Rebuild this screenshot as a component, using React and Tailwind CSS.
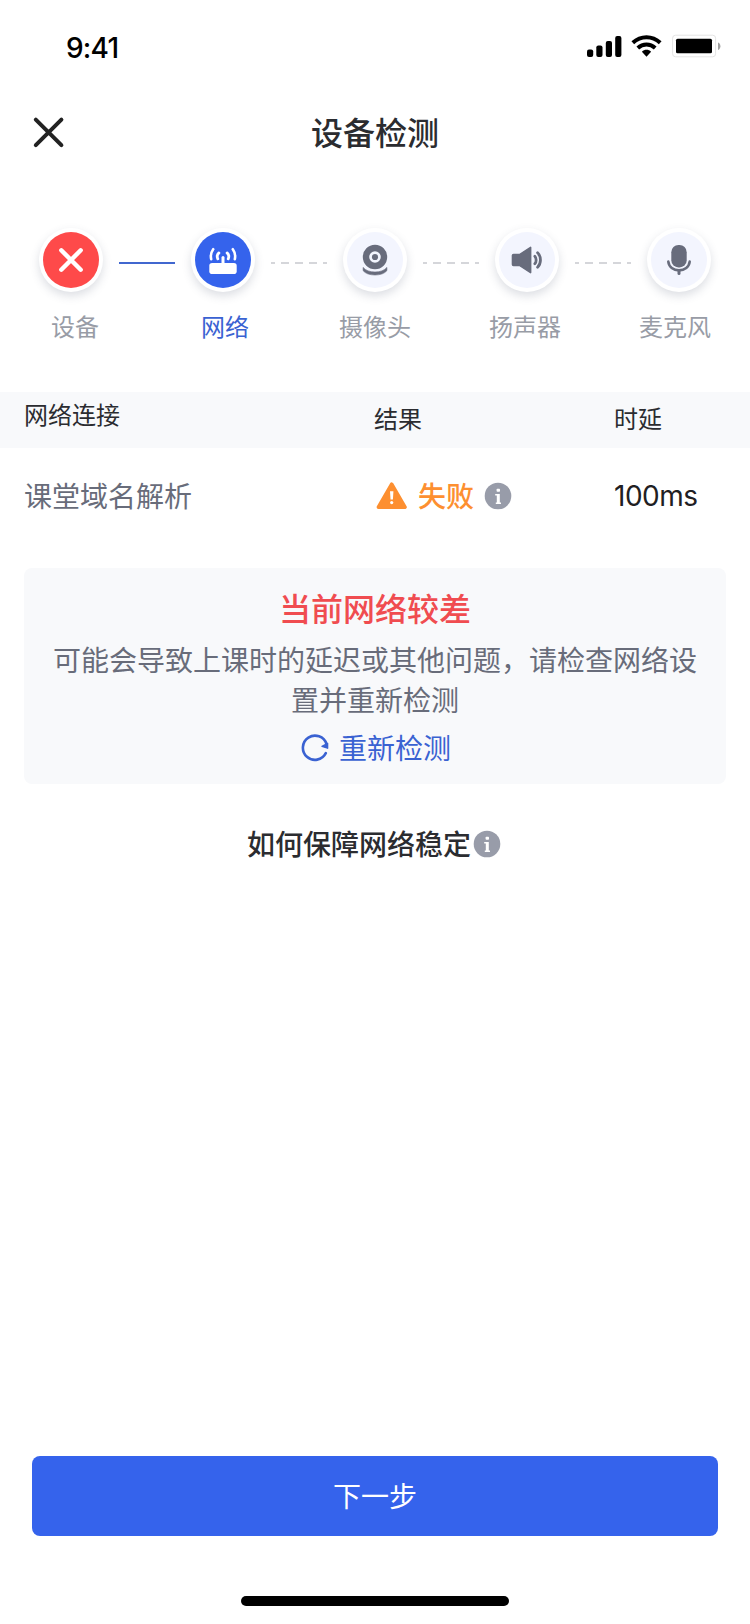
const steps = [
  { id: 'device', label: '设备', status: 'error', icon: CrossIcon },
  { id: 'network', label: '网络', status: 'active', icon: RouterIcon },
  { id: 'camera', label: '摄像头', status: 'idle', icon: CameraIcon },
  { id: 'speaker', label: '扬声器', status: 'idle', icon: SpeakerIcon },
  { id: 'mic', label: '麦克风', status: 'idle', icon: MicIcon },
];

const circleColors = {
  error: 'bg-[#fe4a4a] text-white',
  active: 'bg-[#3563ec] text-white',
  idle: 'bg-[#f3f5fe] text-[#686c7c]',
};

function CrossIcon() {
  return (
    <svg width="56" height="56" viewBox="0 0 56 56" stroke="currentColor" strokeWidth="4.4" strokeLinecap="round">
      <path d="M18.3 18.3 37.7 37.7M37.7 18.3 18.3 37.7" />
    </svg>
  );
}

function RouterIcon() {
  return (
    <svg width="56" height="56" viewBox="0 0 56 56" fill="none" stroke="currentColor" strokeLinecap="round">
      <rect x="14.3" y="31" width="27.4" height="11" rx="2.8" fill="currentColor" stroke="none" />
      <path d="M28 25.4V32" strokeWidth="3" />
      <path d="M23.9 20.9C22.2 22.4 21.8 24.6 22.8 26.8M32.1 20.9C33.8 22.4 34.2 24.6 33.2 26.8" strokeWidth="2.8" />
      <path d="M18.2 17.2C16 20.2 15.4 23.6 16.2 27.2M37.8 17.2C40 20.2 40.6 23.6 39.8 27.2" strokeWidth="2.6" />
    </svg>
  );
}

function CameraIcon() {
  return (
    <svg width="56" height="56" viewBox="0 0 56 56" fill="none" stroke="currentColor">
      <circle cx="28" cy="25" r="9" strokeWidth="6.4" />
      <circle cx="28" cy="25" r="3.1" fill="currentColor" stroke="none" />
      <path
        d="M16.1 35.4C18.6 38.4 22.8 40 28 40C33.2 40 37.4 38.4 39.9 35.4V38.6C37.8 41.4 33.5 43 28 43C22.5 43 18.2 41.4 16.1 38.6Z"
        fill="currentColor"
        strokeWidth=".6"
        strokeLinejoin="round"
      />
    </svg>
  );
}

function SpeakerIcon() {
  return (
    <svg width="56" height="56" viewBox="0 0 56 56" fill="none" stroke="currentColor" strokeLinecap="round">
      <path
        d="M14.5 22.6H20.5L31.6 15.4V40.6L20.5 33.4H14.5Q13.5 33.4 13.5 32.4V23.6Q13.5 22.6 14.5 22.6Z"
        fill="currentColor"
        strokeWidth="1.6"
        strokeLinejoin="round"
      />
      <path d="M35.8 24.2C37.6 26 37.6 30 35.8 31.8" strokeWidth="2.8" />
      <path d="M38.6 20.8C42.4 24.6 42.4 31.4 38.6 35.2" strokeWidth="2.8" />
    </svg>
  );
}

function MicIcon() {
  return (
    <svg width="56" height="56" viewBox="0 0 56 56" fill="none" stroke="currentColor" strokeLinecap="round">
      <rect x="20.3" y="13" width="15.4" height="22.4" rx="7.2" fill="currentColor" stroke="none" />
      <path d="M17.3 29.6C17.9 35 22.4 38.4 28 38.4C33.6 38.4 38.1 35 38.7 29.6" strokeWidth="2.6" />
      <path d="M28 39V41.4" strokeWidth="3" />
    </svg>
  );
}

function InfoIcon() {
  return (
    <svg width="28" height="28" viewBox="0 0 28 28">
      <circle cx="14" cy="14" r="13.3" fill="#989ca9" />
      <rect x="12.6" y="6.8" width="3.4" height="3" rx=".8" fill="#fff" />
      <path d="M11.2 12H15.8V20.4H17V22H11.8V20.4H12.8V13.6H11.2Z" fill="#fff" />
    </svg>
  );
}

function WarningIcon() {
  return (
    <svg width="32" height="28" viewBox="0 0 32 28">
      <path d="M15.7 2.2 29 25.2H2.4Z" fill="#fd8f30" stroke="#fd8f30" strokeWidth="3.6" strokeLinejoin="round" />
      <path d="M14 9.2H17.4L16.9 17.6H14.5Z" fill="#fff" />
      <circle cx="15.7" cy="20.6" r="1.6" fill="#fff" />
    </svg>
  );
}

function RefreshIcon() {
  return (
    <svg width="28" height="28" viewBox="0 0 28 28">
      <path d="M24.8 19.2A12.1 12.1 0 1 1 25.5 10" fill="none" stroke="#3a62d2" strokeWidth="2.6" strokeLinecap="round" />
      <path d="M26.6 9.4V14.2L21 12.4Z" fill="#3a62d2" stroke="#3a62d2" strokeWidth="1.4" strokeLinejoin="round" />
    </svg>
  );
}

function StatusBar() {
  return (
    <div className="flex h-22 items-center justify-between pl-[66px] pr-[29px] pt-1">
      <span className="pt-[3px] font-['Inter',sans-serif] text-[28px] leading-[34px] font-medium tracking-[-0.8px] text-black">
        9:41
      </span>
      <svg width="141" height="28" viewBox="0 0 141 28">
        <rect x="7" y="17.6" width="6.2" height="7.4" rx="2" />
        <rect x="16.3" y="13.6" width="6.2" height="11.4" rx="2" />
        <rect x="25.8" y="9" width="6.2" height="16" rx="2" />
        <rect x="35.2" y="4" width="6.2" height="21" rx="2" />
        <g fill="none" stroke="#000" strokeWidth="4">
          <path d="M52.8 10.8C60.8 3.4 72.2 3.4 80.2 10.8" />
          <path d="M57.8 16C62.9 11.4 70.1 11.4 75.2 16" />
        </g>
        <path d="M61.9 19.8C64.5 17.2 68.5 17.2 71.1 19.8L66.5 24.8Z" />
        <rect x="92.6" y="3.2" width="43" height="21.6" rx="3" fill="none" stroke="#e4e4e4" strokeWidth="1" />
        <rect x="96" y="6.7" width="36" height="14.6" rx="1.6" />
        <path d="M138 10.6C141.2 11.6 141.2 17 138 18Z" fill="#a0a0a0" />
      </svg>
    </div>
  );
}

function Connector({ done }) {
  return (
    <svg className="mt-1 shrink-0" width="56" height="4" viewBox="0 0 56 4">
      <path
        d="M0 3H56"
        stroke={done ? '#4167cf' : '#d5d6da'}
        strokeWidth="2"
        strokeDasharray={done ? undefined : '8 6'}
        strokeDashoffset="4"
      />
    </svg>
  );
}

function Stepper() {
  return (
    <section className="pt-[52px]">
      <div className="flex items-center justify-between px-[39px]">
        {steps.map((step, i) => (
          <div key={step.id} className={i > 0 ? 'flex items-center gap-4' : 'flex items-center'}>
            {i > 0 && <Connector done={i === 1} />}
            <div className="rounded-full bg-white p-1 shadow-[0_4px_10px_rgba(60,70,100,0.18)]">
              <div className={`size-14 rounded-full ${circleColors[step.status]}`}>
                <step.icon />
              </div>
            </div>
          </div>
        ))}
      </div>
      <div className="mt-[17px] grid grid-cols-5 text-center text-2xl leading-[34px]">
        {steps.map((step) => (
          <span key={step.id} className={step.status === 'active' ? 'text-[#3a62d2]' : 'text-[#989ca6]'}>
            {step.label}
          </span>
        ))}
      </div>
    </section>
  );
}

export default function App() {
  return (
    <div className="flex h-[1624px] w-[750px] flex-col bg-white font-['Noto_Sans_CJK_SC',sans-serif] text-[#2b2c30]">
      <StatusBar />

      <header className="grid h-22 grid-cols-3 items-center px-8">
        <svg width="34" height="34" viewBox="0 0 34 34" stroke="#222" strokeWidth="4" strokeLinecap="round">
          <path d="M3.8 4.6 29.4 30.2M29.4 4.6 3.8 30.2" />
        </svg>
        <h1 className="pb-0.5 text-center text-[32px] leading-[44px] font-medium">设备检测</h1>
      </header>

      <Stepper />

      <section className="mt-[49px]">
        <div className="flex h-14 bg-[#f8f9fb] px-6 text-2xl leading-8">
          <span className="w-[350px] pt-1.5">网络连接</span>
          <span className="w-60 pt-2.5">结果</span>
          <span className="pt-2.5">时延</span>
        </div>
        <div className="flex h-24 items-center px-6 text-[28px] leading-10">
          <span className="w-[350px] pb-0.5 text-[#686c7a]">课堂域名解析</span>
          <div className="flex w-60 items-center pl-0.5">
            <WarningIcon />
            <span className="mx-2.5 pb-0.5 font-medium text-[#fd8f30]">失败</span>
            <InfoIcon />
          </div>
          <span className="font-['Inter',sans-serif] tracking-[-0.5px] text-[#1f2023]">100ms</span>
        </div>
      </section>

      <section className="mx-6 mt-6 flex h-54 flex-col items-center rounded-lg bg-[#f8f9fb] px-7 pt-[17px]">
        <h2 className="text-[32px] leading-11 font-medium text-[#f04c50]">当前网络较差</h2>
        <p className="mt-2.5 text-center text-[28px] leading-10 text-[#686c7a]">
          可能会导致上课时的延迟或其他问题，请检查网络设置并重新检测
        </p>
        <button className="mt-2 flex items-center gap-2.5 pl-0.5 text-[28px] leading-10 text-[#3a62d2]">
          <span className="pt-0.5">
            <RefreshIcon />
          </span>
          重新检测
        </button>
      </section>

      <div className="mt-[37px] flex items-center justify-center pr-0.5 text-[28px] leading-11 font-medium">
        <span className="pb-0.5">如何保障网络稳定</span>
        <span className="ml-0.5">
          <InfoIcon />
        </span>
      </div>

      <footer className="mt-auto flex flex-col items-center px-8 pb-[18px]">
        <button className="h-20 w-full rounded-lg bg-[#3563ec] pb-0.5 text-[28px] leading-10 text-white">下一步</button>
        <div className="mt-[60px] h-2.5 w-[268px] rounded-full bg-black" />
      </footer>
    </div>
  );
}
